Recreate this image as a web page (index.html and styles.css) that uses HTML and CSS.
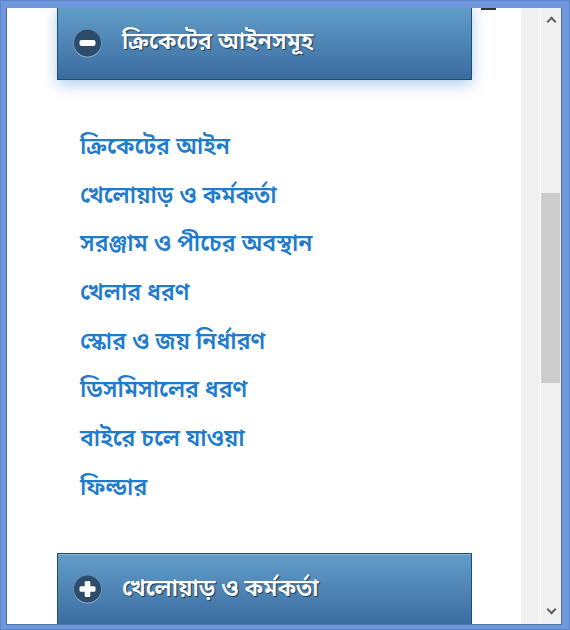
FILE: index.html
```html
<!DOCTYPE html>
<html lang="bn">

<head>
    <meta charset="UTF-8">
    <meta name="viewport" content="width=device-width, initial-scale=1.0">
    <title>ক্রিকেটের আইনসমূহ</title>
    <link rel="stylesheet" href="styles.css">
</head>

<body>
    <div class="window">
        <div class="viewport">
            <div class="page">
                <span class="edge"></span>
                <div class="accordion">
                    <div class="panel open">
                        <div class="panel-head">
                            <span class="toggle">
                                <svg width="29" height="29" viewBox="0 0 29 29">
                                    <circle cx="14.5" cy="14.5" r="14" fill="#8fb0cc" />
                                    <circle cx="14.5" cy="14" r="13.6" fill="#2d4c6c" />
                                    <rect x="6.5" y="11" width="16" height="6" rx="2" fill="#fff" />
                                </svg>
                            </span>
                            <span class="title">ক্রিকেটের আইনসমূহ</span>
                        </div>
                        <ul class="links">
                            <li><a href="#laws">ক্রিকেটের আইন</a></li>
                            <li><a href="#players">খেলোয়াড় ও কর্মকর্তা</a></li>
                            <li><a href="#equipment">সরঞ্জাম ও পীচের অবস্থান</a></li>
                            <li><a href="#play">খেলার ধরণ</a></li>
                            <li><a href="#score">স্কোর ও জয় নির্ধারণ</a></li>
                            <li><a href="#dismissal">ডিসমিসালের ধরণ</a></li>
                            <li><a href="#out">বাইরে চলে যাওয়া</a></li>
                            <li><a href="#fielder">ফিল্ডার</a></li>
                        </ul>
                    </div>
                    <div class="panel">
                        <div class="panel-head">
                            <span class="toggle">
                                <svg width="29" height="29" viewBox="0 0 29 29">
                                    <circle cx="14.5" cy="14.5" r="14" fill="#8fb0cc" />
                                    <circle cx="14.5" cy="14" r="13.6" fill="#2d4c6c" />
                                    <rect x="6.5" y="11.2" width="16" height="5.6" rx="1.5" fill="#fff" />
                                    <rect x="11.7" y="6" width="5.6" height="16" rx="1.5" fill="#fff" />
                                </svg>
                            </span>
                            <span class="title">খেলোয়াড় ও কর্মকর্তা</span>
                        </div>
                    </div>
                </div>
            </div>
            <div class="track"></div>
            <div class="scrollbar">
                <span class="arrow arrow-up"></span>
                <span class="thumb"></span>
                <span class="arrow arrow-down"></span>
            </div>
        </div>
    </div>
</body>

</html>
```

FILE: styles.css
```css
* {
    padding: 0;
    margin: 0;
    box-sizing: border-box;
}

body {
    font-family: "Noto Sans Bengali", "Noto Sans", "DejaVu Sans", sans-serif;
}

.window {
    width: 570px;
    height: 630px;
    background: #6f98dc;
    border: 1px solid #5f86c8;
    padding: 7px 7px 4px 5px;
}

.viewport {
    display: flex;
    height: 100%;
    border-left: 1px solid #4e71aa;
    border-right: 1px solid #4e71aa;
    border-bottom: 1px solid #4e71aa;
    background: #fff;
}

.page {
    position: relative;
    flex: 1;
    overflow: hidden;
    background: #fff;
}

.page .edge {
    position: absolute;
    top: 0;
    left: 474px;
    width: 15px;
    height: 2px;
    background: #333;
    z-index: 2;
}

.accordion {
    margin: -2px 0 0 50px;
    width: 415px;
}

.panel-head {
    display: flex;
    align-items: center;
    height: 74px;
    padding-left: 15px;
    border: 1px solid #1f4c72;
    background: linear-gradient(#629ec9, #3a6b9f);
    box-shadow: inset 0 1px 0 rgba(255, 255, 255, .25);
}

.panel.open .panel-head {
    box-shadow: 0 4px 14px rgba(70, 140, 215, .45);
}

.toggle {
    display: flex;
    width: 29px;
    height: 29px;
}

.title {
    margin-left: 20px;
    color: #fff;
    font-size: 23px;
    font-weight: 600;
    text-shadow: 1px 1px 1px #1b3550;
}

.links {
    list-style: none;
    padding: 43.7px 0 39.7px 23px;
}

.links>li {
    display: flex;
    align-items: center;
    height: 48.7px;
}

.links a {
    color: #1f7ccc;
    font-size: 23px;
    font-weight: 600;
    text-decoration: none;
}

.track {
    width: 20px;
    background: #f0f0f0;
    border-right: 1px solid #fff;
}

.scrollbar {
    position: relative;
    width: 20px;
    background: #f0f0f0;
}

.scrollbar .thumb {
    position: absolute;
    left: 0;
    right: 1px;
    top: 185px;
    height: 190px;
    background: #cdcdcd;
}

.scrollbar .arrow {
    position: absolute;
    left: 7px;
    width: 7px;
    height: 7px;
    border-top: 2px solid #606060;
    border-left: 2px solid #606060;
}

.scrollbar .arrow-up {
    top: 10px;
    transform: rotate(45deg);
}

.scrollbar .arrow-down {
    bottom: 11px;
    transform: rotate(-135deg);
}
```
